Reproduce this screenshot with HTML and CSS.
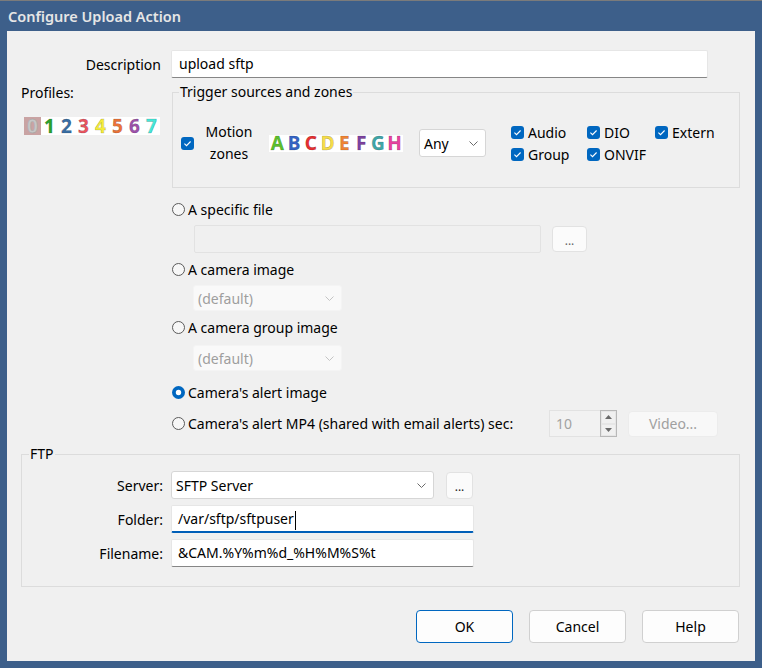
FILE: index.html
```html
<!DOCTYPE html>
<html>
<head>
<meta charset="utf-8">
<title>Configure Upload Action</title>
<link rel="stylesheet" href="styles.css">
</head>
<body>
<div class="window">
  <div class="titlebar">Configure Upload Action</div>
  <div class="client">
    <div class="desc-row">
      <div class="desc-label">Description</div>
      <div class="text-input desc-input">upload sftp</div>
    </div>

    <div class="main">
      <div class="left">
        <div class="profiles-label">Profiles:</div>
        <div class="profiles">
          <span class="p0">0</span><span class="p1">1</span><span class="p2">2</span><span class="p3">3</span><span class="p4">4</span><span class="p5">5</span><span class="p6">6</span><span class="p7">7</span>
        </div>
      </div>

      <div class="right">
        <div class="group trigger">
          <div class="legend">Trigger sources and zones</div>
          <div class="trigger-row">
            <svg class="cb" width="13" height="13" viewBox="0 0 13 13"><rect width="13" height="13" rx="3" fill="#0067c0"/><path d="M3.4 6.7 L5.5 8.7 L9.6 4.5" fill="none" stroke="#fff" stroke-width="1.1"/></svg>
            <div class="motion-label">Motion<br>zones</div>
            <div class="zones">
              <span class="zA">A</span><span class="zB">B</span><span class="zC">C</span><span class="zD">D</span><span class="zE">E</span><span class="zF">F</span><span class="zG">G</span><span class="zH">H</span>
            </div>
            <div class="select any-select"><span>Any</span><svg width="9" height="5" viewBox="0 0 9 5"><path d="M0.5 0.5 L4.5 4.5 L8.5 0.5" fill="none" stroke="#6a6a6a" stroke-width="1"/></svg></div>
            <div class="cb-grid">
              <div class="cb-item"><svg class="cb" width="13" height="13" viewBox="0 0 13 13"><rect width="13" height="13" rx="3" fill="#0067c0"/><path d="M3.4 6.7 L5.5 8.7 L9.6 4.5" fill="none" stroke="#fff" stroke-width="1.1"/></svg><span>Audio</span></div>
              <div class="cb-item"><svg class="cb" width="13" height="13" viewBox="0 0 13 13"><rect width="13" height="13" rx="3" fill="#0067c0"/><path d="M3.4 6.7 L5.5 8.7 L9.6 4.5" fill="none" stroke="#fff" stroke-width="1.1"/></svg><span>DIO</span></div>
              <div class="cb-item"><svg class="cb" width="13" height="13" viewBox="0 0 13 13"><rect width="13" height="13" rx="3" fill="#0067c0"/><path d="M3.4 6.7 L5.5 8.7 L9.6 4.5" fill="none" stroke="#fff" stroke-width="1.1"/></svg><span>Extern</span></div>
              <div class="cb-item"><svg class="cb" width="13" height="13" viewBox="0 0 13 13"><rect width="13" height="13" rx="3" fill="#0067c0"/><path d="M3.4 6.7 L5.5 8.7 L9.6 4.5" fill="none" stroke="#fff" stroke-width="1.1"/></svg><span>Group</span></div>
              <div class="cb-item"><svg class="cb" width="13" height="13" viewBox="0 0 13 13"><rect width="13" height="13" rx="3" fill="#0067c0"/><path d="M3.4 6.7 L5.5 8.7 L9.6 4.5" fill="none" stroke="#fff" stroke-width="1.1"/></svg><span>ONVIF</span></div>
            </div>
          </div>
        </div>

        <div class="options">
          <div class="radio-row"><svg class="radio" width="13" height="13" viewBox="0 0 13 13"><circle cx="6.5" cy="6.5" r="6" fill="#f7f7f7" stroke="#5a5a5a" stroke-width="1"/></svg><span>A specific file</span></div>
          <div class="file-row">
            <div class="disabled-input"></div>
            <div class="small-btn file-btn">...</div>
          </div>
          <div class="radio-row gap6"><svg class="radio" width="13" height="13" viewBox="0 0 13 13"><circle cx="6.5" cy="6.5" r="6" fill="#f7f7f7" stroke="#5a5a5a" stroke-width="1"/></svg><span>A camera image</span></div>
          <div class="select disabled-select gap6"><span>(default)</span><svg width="9" height="5" viewBox="0 0 9 5"><path d="M0.5 0.5 L4.5 4.5 L8.5 0.5" fill="none" stroke="#c4c4c4" stroke-width="1"/></svg></div>
          <div class="radio-row gap6"><svg class="radio" width="13" height="13" viewBox="0 0 13 13"><circle cx="6.5" cy="6.5" r="6" fill="#f7f7f7" stroke="#5a5a5a" stroke-width="1"/></svg><span>A camera group image</span></div>
          <div class="select disabled-select gap8"><span>(default)</span><svg width="9" height="5" viewBox="0 0 9 5"><path d="M0.5 0.5 L4.5 4.5 L8.5 0.5" fill="none" stroke="#c4c4c4" stroke-width="1"/></svg></div>
          <div class="radio-row gap11"><svg class="radio" width="13" height="13" viewBox="0 0 13 13"><circle cx="6.5" cy="6.5" r="6.5" fill="#0067c0"/><circle cx="6.5" cy="6.5" r="2.7" fill="#fff"/></svg><span>Camera's alert image</span></div>
          <div class="mp4-row">
            <div class="mp4-label"><svg class="radio" width="13" height="13" viewBox="0 0 13 13"><circle cx="6.5" cy="6.5" r="6" fill="#f7f7f7" stroke="#5a5a5a" stroke-width="1"/></svg><span>Camera's alert MP4 (shared with email alerts) sec:</span></div>
            <div class="spinner">
              <div class="spin-value">10</div>
              <div class="spin-btns">
                <div class="spin-btn"><svg width="7" height="4" viewBox="0 0 7 4"><path d="M0 4 L3.5 0 L7 4 Z" fill="#6a6a6a"/></svg></div>
                <div class="spin-btn"><svg width="7" height="4" viewBox="0 0 7 4"><path d="M0 0 L3.5 4 L7 0 Z" fill="#6a6a6a"/></svg></div>
              </div>
            </div>
            <div class="video-btn">Video...</div>
          </div>
        </div>
      </div>
    </div>

    <div class="group ftp">
      <div class="legend ftp-legend">FTP</div>
      <div class="ftp-rows">
        <div class="ftp-row">
          <div class="ftp-label">Server:</div>
          <div class="select server-select"><span>SFTP Server</span><svg width="9" height="5" viewBox="0 0 9 5"><path d="M0.5 0.5 L4.5 4.5 L8.5 0.5" fill="none" stroke="#6a6a6a" stroke-width="1"/></svg></div>
          <div class="small-btn server-btn">...</div>
        </div>
        <div class="ftp-row">
          <div class="ftp-label">Folder:</div>
          <div class="text-input ftp-input focused">/var/sftp/sftpuser<span class="caret"></span></div>
        </div>
        <div class="ftp-row">
          <div class="ftp-label">Filename:</div>
          <div class="text-input ftp-input">&amp;CAM.%Y%m%d_%H%M%S%t</div>
        </div>
      </div>
    </div>

    <div class="buttons">
      <div class="btn default">OK</div>
      <div class="btn">Cancel</div>
      <div class="btn">Help</div>
    </div>
  </div>
</div>
</body>
</html>
```

FILE: styles.css
```css
* { box-sizing: border-box; }
html, body { margin: 0; padding: 0; }
body {
  width: 762px;
  height: 668px;
  overflow: hidden;
  font-family: "Noto Sans", "DejaVu Sans", sans-serif;
  font-size: 14px;
  color: #000;
  background: #3d5f8a;
}
.window {
  height: 668px;
  border-top: 1px solid #7b7b7b;
  background: #3d5f8a;
  padding: 0 7px 7px 7px;
  display: flex;
  flex-direction: column;
}
.titlebar {
  height: 30px;
  flex: none;
  color: #e6e6e6;
  font-weight: 600;
  font-size: 14.5px;
  line-height: 30px;
  padding-left: 1px;
}
.client {
  flex: 1;
  background: #f0f0f0;
}

/* description */
.desc-row {
  display: flex;
  align-items: center;
  margin-top: 19px;
  height: 28px;
}
.desc-label {
  width: 154px;
  text-align: right;
  margin-right: 10px;
}
.text-input {
  height: 28px;
  background: #fff;
  border: 1px solid #e6e6e6;
  border-bottom-color: #868686;
  border-radius: 2px;
  padding: 0 7px;
  line-height: 26px;
  white-space: nowrap;
}
.desc-input { width: 537px; }

/* main */
.main { display: flex; margin-top: 14px; }
.left { width: 165px; flex: none; padding-left: 14px; }
.profiles-label { margin-top: -9px; line-height: 20px; }
.profiles {
  display: flex;
  margin: 14px 0 0 3px;
  background: #fff;
  width: 136px;
  height: 18px;
}
.profiles span {
  width: 17px;
  text-align: center;
  font-weight: 700;
  font-size: 19px;
  line-height: 18px;
  -webkit-text-stroke: 0.4px rgba(0,0,0,0.35);
}
.profiles .p0 { background: #c9a3a3; color: #c6c6c6; -webkit-text-stroke: 0.4px #a0a0a0; }
.p1 { color: #2ba32b; }
.p2 { color: #3a6ea3; }
.p3 { color: #ea5560; }
.p4 { color: #f4ec3a; }
.p5 { color: #ea7338; }
.p6 { color: #9c52aa; }
.p7 { color: #45e8d8; }

.right { width: 568px; flex: none; }
.group { border: 1px solid #dcdcdc; }
.legend {
  display: block;
  width: fit-content;
  margin: -11px 0 0 6px;
  padding: 0 1px;
  height: 20px;
  line-height: 20px;
  background: #f0f0f0;
}

/* trigger */
.trigger { height: 96px; }
.trigger-row {
  display: flex;
  align-items: center;
  margin-top: 19px;
  padding-left: 8px;
  height: 44px;
}
.cb { flex: none; display: block; }
.motion-label {
  width: 54px;
  margin-left: 8px;
  text-align: center;
  line-height: 22px;
}
.zones {
  display: flex;
  margin-left: 13px;
  width: 134px;
  height: 17px;
  background: #fff;
}
.zones span {
  width: 16.75px;
  text-align: center;
  font-weight: 700;
  font-size: 19px;
  line-height: 17px;
  -webkit-text-stroke: 0.4px rgba(0,0,0,0.3);
}
.zA { color: #5cbf2c; }
.zB { color: #3463c4; }
.zC { color: #e63030; }
.zD { color: #f5dc4a; }
.zE { color: #f08434; }
.zF { color: #7d42a0; }
.zG { color: #3fa6a8; }
.zH { color: #e6429e; }

.select {
  display: flex;
  align-items: center;
  justify-content: space-between;
  height: 28px;
  background: #fff;
  border: 1px solid #d6d6d6;
  border-radius: 3px;
  padding: 0 7px 0 4px;
}
.any-select { margin-left: 16px; width: 67px; }
.cb-grid {
  margin-left: 25px;
  display: grid;
  grid-template-columns: 76px 68px auto;
  grid-auto-rows: 22px;
}
.cb-item { display: flex; align-items: center; }
.cb-item span { margin-left: 4px; }

/* options */
.options { padding-top: 11px; }
.radio-row { display: flex; align-items: center; height: 20px; }
.radio { flex: none; display: block; margin-right: 3px; }
.gap6 { margin-top: 6px; }
.gap8 { margin-top: 8px; }
.gap11 { margin-top: 11px; }
.file-row { display: flex; align-items: center; margin-top: 6px; padding-left: 22px; height: 28px; }
.disabled-input {
  width: 347px;
  height: 28px;
  border: 1px solid #e2e2e2;
  border-radius: 2px;
  background: #f0f0f0;
}
.small-btn {
  display: flex;
  align-items: center;
  justify-content: center;
  background: #fbfbfb;
  border: 1px solid #e2e2e2;
  border-radius: 4px;
  font-size: 12px;
  color: #444;
}
.file-btn { margin-left: 11px; width: 35px; height: 26px; color: #666; padding-top: 3px; }
.disabled-select {
  margin-left: 21px;
  width: 149px;
  height: 26px;
  background: #f9f9f9;
  border-color: #f4f4f4;
  color: #9e9e9e;
}
.mp4-row { display: flex; align-items: center; margin-top: 8px; height: 27px; }
.mp4-label { display: flex; align-items: center; width: 377px; }
.spinner {
  display: flex;
  width: 68px;
  height: 27px;
  border: 1px solid #e2e2e2;
  background: #f2f2f2;
}
.spin-value { flex: 1; color: #a2a2a2; padding-left: 6px; line-height: 25px; }
.spin-btns {
  width: 17px;
  display: flex;
  flex-direction: column;
  border: 1px solid #b8b8b8;
  margin: -1px -1px -1px 0;
}
.spin-btn {
  flex: 1;
  display: flex;
  align-items: center;
  justify-content: center;
  border: 1px solid #e6e6e6;
  background: #f0f0f0;
}
.video-btn {
  margin-left: 11px;
  width: 90px;
  height: 26px;
  border: 1px solid #ececec;
  border-radius: 4px;
  background: #f8f8f8;
  color: #a0a0a0;
  display: flex;
  align-items: center;
  justify-content: center;
}

/* ftp */
.ftp { margin: 17px 0 0 14px; width: 719px; height: 133px; }
.ftp-legend { margin-left: 7px; }
.ftp-rows { margin-top: 7px; display: flex; flex-direction: column; gap: 6px; }
.ftp-row { display: flex; align-items: center; height: 28px; }
.ftp-label { width: 141px; text-align: right; margin-right: 8px; }
.server-select { width: 263px; }
.server-btn { margin-left: 12px; width: 27px; height: 27px; color: #222; padding-top: 3px; }
.ftp-input { width: 303px; padding-left: 6px; }
.ftp-input.focused { border-bottom: 2px solid #005fb8; line-height: 25px; }
.caret {
  display: inline-block;
  width: 1px;
  height: 19px;
  background: #000;
  vertical-align: middle;
  margin-left: 1px;
}

/* buttons */
.buttons {
  display: flex;
  justify-content: flex-end;
  gap: 16px;
  margin-top: 23px;
  padding-right: 16px;
}
.btn {
  width: 97px;
  height: 33px;
  border: 1px solid #d0d0d0;
  border-radius: 4px;
  background: #fdfdfd;
  display: flex;
  align-items: center;
  justify-content: center;
}
.btn.default { border-color: #0067c0; }
```
